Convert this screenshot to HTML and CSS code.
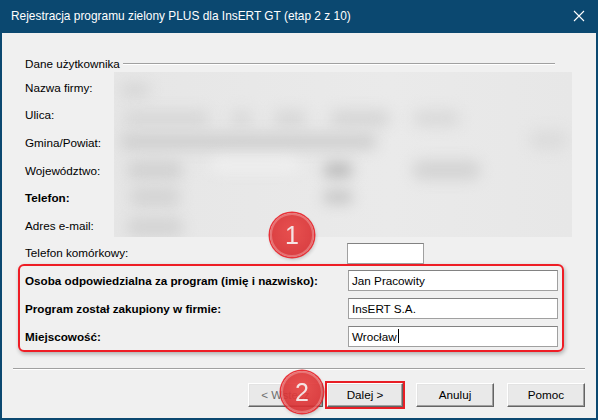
FILE: index.html
```html
<!DOCTYPE html>
<html lang="pl">
<head>
  <meta charset="UTF-8" />
  <title>Rejestracja programu</title>
  <link rel="stylesheet" href="styles.css">
</head>
<body>
  <div class="window">
    <div class="titlebar">
      <span class="title">Rejestracja programu zielony PLUS dla InsERT GT (etap 2 z 10)</span>
      <svg class="close" width="12" height="12" viewBox="0 0 12 12"><path d="M1 1L11 11M11 1L1 11" stroke="#fff" stroke-width="1.1" fill="none"/></svg>
    </div>

    <div class="content">
      <div class="group-title">
        <span>Dane użytkownika</span>
        <span class="groove"></span>
      </div>

      <div class="user-grid">
        <div class="blurred">
          <i class="blob b1"></i>
          <i class="blob b2"></i><i class="blob b3"></i><i class="blob b4"></i><i class="blob b5"></i><i class="blob b6"></i>
          <i class="blob b7"></i><i class="blob b8"></i>
          <i class="blob b9"></i><i class="blob b10"></i><i class="blob b11"></i><i class="blob light"></i>
          <i class="blob b12"></i><i class="blob b13"></i>
          <i class="blob b14"></i>
        </div>
        <div class="label">Nazwa firmy:</div>
        <div class="label">Ulica:</div>
        <div class="label">Gmina/Powiat:</div>
        <div class="label">Województwo:</div>
        <div class="label bold">Telefon:</div>
        <div class="label">Adres e-mail:</div>
      </div>

      <div class="mobile-row">
        <span class="label wide">Telefon komórkowy:</span>
        <div class="field small"></div>
      </div>

      <div class="highlight">
        <div class="form-row">
          <span class="label wide bold">Osoba odpowiedzialna za program (imię i nazwisko):</span>
          <div class="field">Jan Pracowity</div>
        </div>
        <div class="form-row">
          <span class="label wide bold">Program został zakupiony w firmie:</span>
          <div class="field">InsERT S.A.</div>
        </div>
        <div class="form-row">
          <span class="label wide bold">Miejscowość:</span>
          <div class="field">Wrocław<span class="caret"></span></div>
        </div>
      </div>

      <div class="separator"></div>

      <div class="buttons">
        <div class="nav-pair">
          <button class="btn btn-back" disabled>&lt; Wstecz</button>
          <button class="btn btn-next">Dalej &gt;</button>
        </div>
        <button class="btn">Anuluj</button>
        <button class="btn">Pomoc</button>
      </div>
    </div>

    <div class="marker marker-1">1</div>
    <div class="marker marker-2">2</div>
  </div>
</body>
</html>
```

FILE: styles.css
```css
body {
  margin: 0;
  background: #f0f0f0;
  font-family: 'Liberation Sans', Arial, sans-serif;
  font-size: 11.7px;
  color: #000;
}

.window {
  position: relative;
  width: 598px;
  height: 420px;
  box-sizing: border-box;
  border: 2px solid #0b4870;
  border-top: none;
  background: #f0f0f0;
  overflow: hidden;
}

.titlebar {
  height: 33px;
  margin: 0 -2px;
  padding: 0 13px 0 11px;
  background: #0b4870;
  color: #fff;
  display: flex;
  align-items: center;
  justify-content: space-between;
  box-sizing: border-box;
}

.title {
  font-size: 11.9px;
  margin-top: -1px;
}

.close {
  margin-top: -1px;
}

.content {
  padding: 24px 11px 0 11px;
}

.group-title {
  display: flex;
  align-items: center;
  width: 530px;
  margin-left: 12px;
  height: 14px;
  line-height: 14px;
  margin-bottom: 3px;
}

.groove {
  flex: 1;
  margin-left: 3px;
  height: 1px;
  background: #a0a0a0;
  border-bottom: 1px solid #fff;
}

.user-grid {
  display: grid;
  grid-template-columns: 89px 458px;
  grid-auto-rows: 27.67px;
  margin-left: 12px;
}

.user-grid .label {
  grid-column: 1;
  align-self: center;
  white-space: nowrap;
}

.label {
  line-height: 14px;
}

.bold {
  font-weight: bold;
}

.blurred {
  grid-column: 2;
  grid-row: 1 / 7;
  position: relative;
  margin-top: -2px;
  height: 165px;
  background: linear-gradient(to right, #e6e6e6, #eaeaea 60%, #e7e7e7);
  overflow: hidden;
}

.blob {
  position: absolute;
  background: #d2d2d2;
  filter: blur(7px);
  border-radius: 8px;
}

.b1 { left: 6px; top: 11px; width: 30px; height: 14px; background: #d6d6d6; }
.b2 { left: 9px; top: 38px; width: 87px; height: 17px; background: #d8d8d8; }
.b3 { left: 116px; top: 38px; width: 23px; height: 17px; background: #dadada; }
.b4 { left: 159px; top: 38px; width: 34px; height: 17px; background: #d8d8d8; }
.b5 { left: 216px; top: 38px; width: 60px; height: 17px; background: #d6d6d6; }
.b6 { left: 299px; top: 38px; width: 47px; height: 17px; background: #dadada; }
.b7 { left: 6px; top: 61px; width: 257px; height: 17px; background: #d0d0d0; }
.b8 { left: 416px; top: 58px; width: 37px; height: 20px; background: #dcdcdc; }
.b9 { left: 13px; top: 88px; width: 56px; height: 20px; background: #d2d2d2; }
.b10 { left: 209px; top: 90px; width: 30px; height: 16px; background: #bcbcbc; }
.b11 { left: 299px; top: 88px; width: 67px; height: 20px; background: #d4d4d4; }
.light { left: 96px; top: 86px; width: 90px; height: 14px; background: #efefef; }
.b12 { left: 16px; top: 115px; width: 50px; height: 20px; background: #d4d4d4; }
.b13 { left: 209px; top: 118px; width: 30px; height: 14px; background: #c6c6c6; }
.b14 { left: 13px; top: 145px; width: 56px; height: 20px; background: #d4d4d4; }

.mobile-row {
  display: flex;
  align-items: center;
  height: 21px;
  margin: 3px 0 0 12px;
}

.wide {
  width: 322px;
  flex: none;
  white-space: nowrap;
}

.field {
  box-sizing: border-box;
  width: 210px;
  height: 21px;
  padding: 0 3px;
  line-height: 19px;
  background: #fff;
  border: 1px solid #a0a0a0;
  border-top-color: #828282;
  display: flex;
  align-items: center;
}

.field.small {
  width: 77px;
}

.caret {
  display: inline-block;
  width: 1px;
  height: 14px;
  margin-left: 1px;
  background: #000;
}

.highlight {
  width: 546px;
  margin-left: 5px;
  box-sizing: border-box;
  padding: 4px 4px 3px 5px;
  border: 2px solid #ee1d25;
  border-radius: 6px;
  box-shadow: 1px 2px 4px rgba(0, 0, 0, 0.28);
  display: flex;
  flex-direction: column;
  gap: 7px;
}

.form-row {
  display: flex;
  align-items: center;
}

.form-row .wide {
  width: 323px;
  padding-top: 1px;
}

.separator {
  margin: 16px 0 0 0;
  height: 1px;
  background: #a0a0a0;
  border-bottom: 1px solid #fff;
}

.buttons {
  display: flex;
  justify-content: flex-end;
  gap: 13px;
  margin-top: 13px;
}

.nav-pair {
  display: flex;
  gap: 4px;
}

.btn {
  width: 78px;
  height: 24px;
  padding: 0;
  font-family: inherit;
  font-size: 11.7px;
  color: #000;
  background: #e9e9e9;
  border: 1px solid #fff;
  border-right-color: #646464;
  border-bottom-color: #646464;
  box-shadow: inset -1px -1px 0 #a0a0a0, inset 1px 1px 0 #e3e3e3;
}

.btn:disabled {
  color: #6d6d6d;
}

.btn-back {
  width: 75px;
}

.btn-next {
  width: 76px;
  outline: 2px solid #e81e25;
}

.marker {
  position: absolute;
  border-radius: 50%;
  background: radial-gradient(circle at 50% 40%, #e8403f, #d2262a);
  box-shadow: inset 0 0 0 2px rgba(255, 200, 200, 0.35), 0 0 0 1.5px #e81e25, 1px 2px 4px rgba(0, 0, 0, 0.3);
  color: #f6e4e4;
  font-size: 25px;
  display: flex;
  align-items: center;
  justify-content: center;
  opacity: 0.9;
}

.marker-1 {
  left: 268px;
  top: 213px;
  width: 44px;
  height: 44px;
}

.marker-2 {
  left: 279px;
  top: 371px;
  width: 42px;
  height: 42px;
}
```
